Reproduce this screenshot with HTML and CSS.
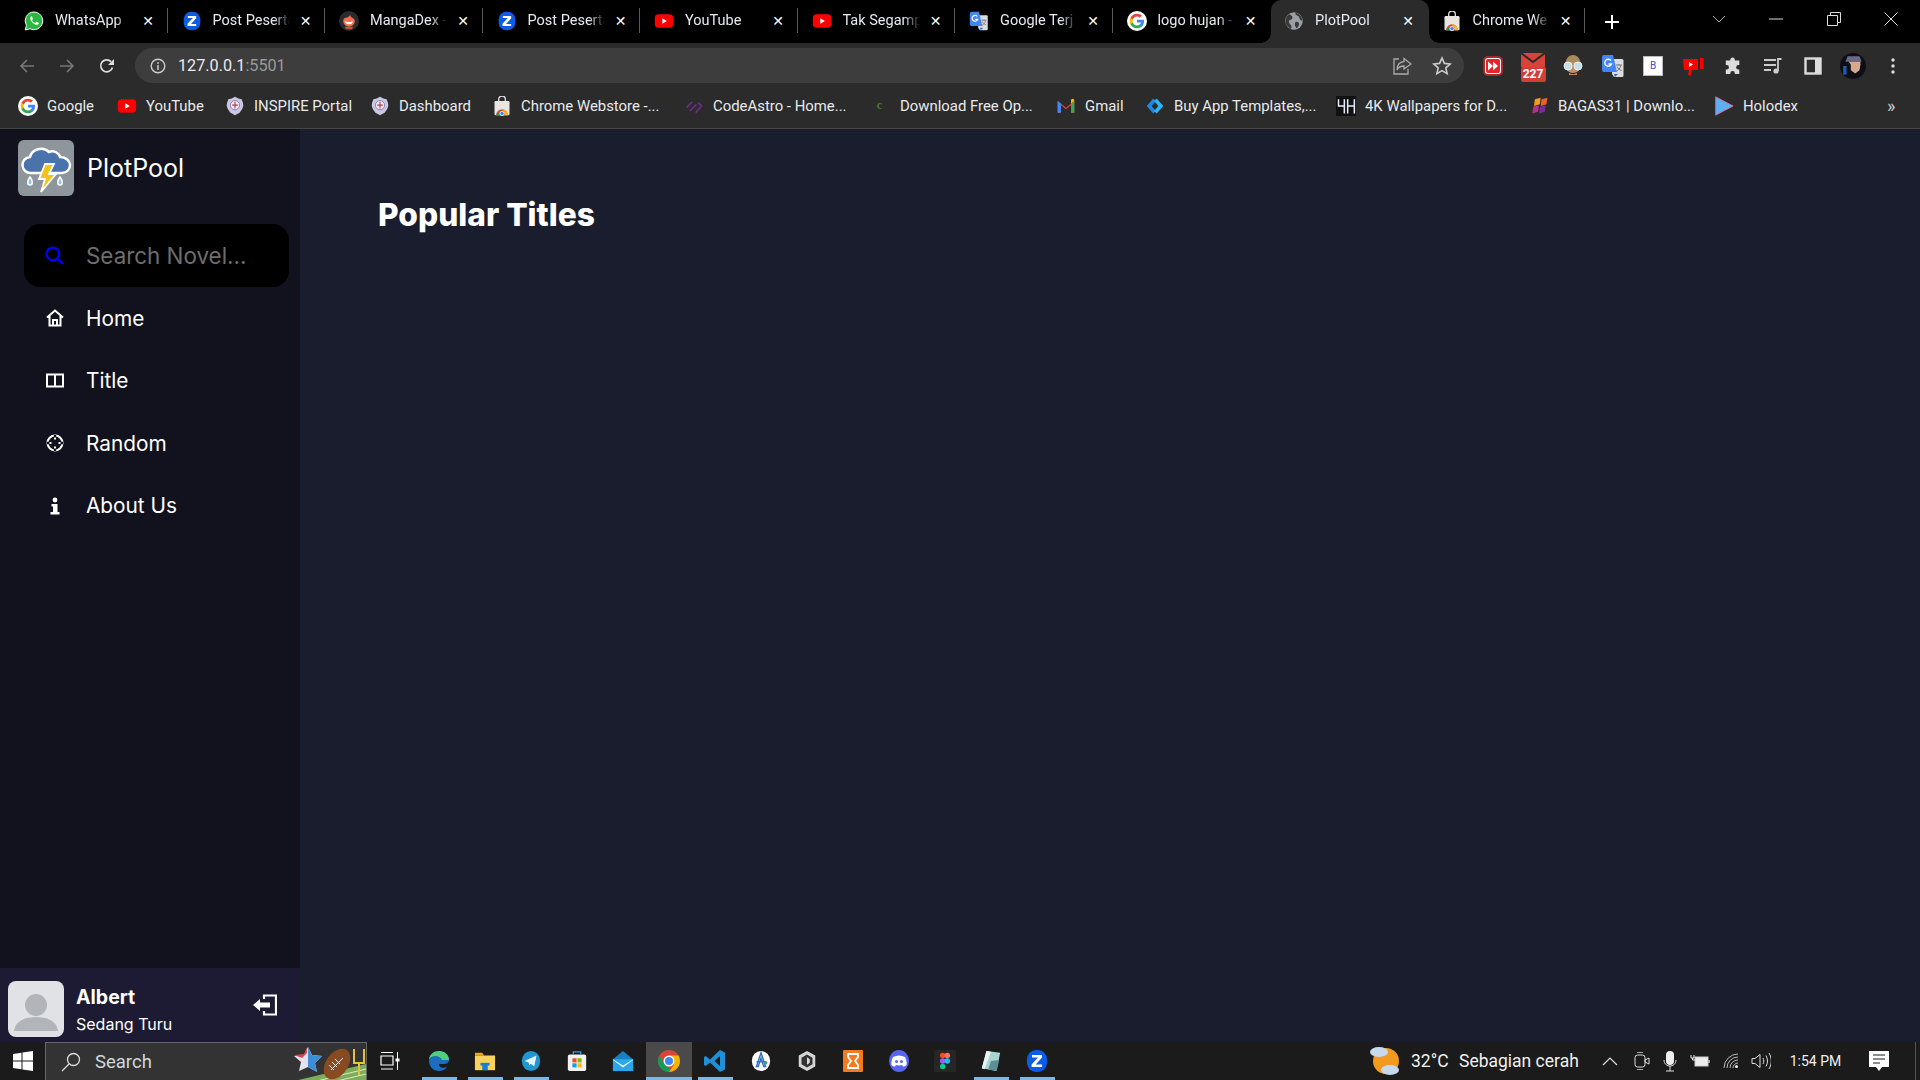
FILE: index.html
```html
<!DOCTYPE html>
<html lang="en">
<head>
<meta charset="utf-8">
<title>PlotPool</title>
<link rel="stylesheet" href="styles.css">
</head>
<body>
<svg class="defs" width="0" height="0" aria-hidden="true">
  <symbol id="g" viewBox="0 0 24 24"><circle cx="12" cy="12" r="12" fill="#fff"/><g transform="translate(2.4 2.4) scale(.8)"><path fill="#4285F4" d="M22.56 12.25c0-.78-.07-1.53-.2-2.25H12v4.26h5.92c-.26 1.37-1.04 2.53-2.21 3.31v2.77h3.57c2.08-1.92 3.28-4.74 3.28-8.09z"/><path fill="#34A853" d="M12 23c2.97 0 5.46-.98 7.28-2.66l-3.57-2.77c-.98.66-2.23 1.06-3.71 1.06-2.86 0-5.29-1.93-6.16-4.53H2.18v2.84C3.99 20.53 7.7 23 12 23z"/><path fill="#FBBC05" d="M5.84 14.09c-.22-.66-.35-1.36-.35-2.09s.13-1.43.35-2.09V7.07H2.18C1.43 8.55 1 10.22 1 12s.43 3.45 1.18 4.93l3.66-2.84z"/><path fill="#EA4335" d="M12 5.38c1.62 0 3.06.56 4.21 1.64l3.15-3.15C17.45 2.09 14.97 1 12 1 7.7 1 3.99 3.47 2.18 7.07l3.66 2.84c.87-2.6 3.3-4.53 6.16-4.53z"/></g></symbol>
  <symbol id="yt" viewBox="0 0 24 24"><rect x="1" y="4" width="22" height="16" rx="4.5" fill="#f00"/><path d="M10 8.8v6.4l5.4-3.2z" fill="#fff"/></symbol>
  <symbol id="z" viewBox="0 0 24 24"><rect x="2" y="1" width="20" height="22" rx="9" fill="#0b5ce6"/><path d="M7 6h10v2.6L10.8 15.6H17V18H6.6v-2.6l6.3-7H7z" fill="#fff"/></symbol>
  <symbol id="wa" viewBox="0 0 24 24"><path d="M12 1.2a10.6 10.6 0 0 0-9.1 16L1.5 22.8l5.7-1.5A10.6 10.6 0 1 0 12 1.2z" fill="#2bb741" stroke="#fff" stroke-width="1.2"/><path d="M8.6 6.6c-.8.6-1.5 1.8-1 3.4.9 3 3.5 5.6 6.5 6.5 1.6.4 2.8-.2 3.4-1 .3-.5.3-1.2.1-1.4l-2.3-1.100c-.3-.1-.5 0-.7.2l-.8 1c-.2.2-.4.2-.7.1a7 7 0 0 1-3.4-3c-.1-.3 0-.5.1-.6l.7-.9c.2-.2.2-.4.1-.6L9.7 6.7c-.2-.3-.7-.4-1.100-.1z" fill="#fff"/></symbol>
  <symbol id="md" viewBox="0 0 24 24"><circle cx="12" cy="12" r="12" fill="#2b2b2f"/><path d="M5 12c0-3 3-5 5-4 1-1 3-3 4-3-.5 1.500.5 2 2 3 2 1 3 2.500 3 4a7 7 0 0 1-14 0z" fill="#f26f4f"/><path d="M7 12c2 1.500 8 1.500 10 0-.5 3-2.500 4-5 4s-4.500-1-5-4z" fill="#fff"/><path d="M7 19h10l-1.500 3h-7z" fill="#b85a40"/></symbol>
  <symbol id="tr" viewBox="0 0 24 24"><path d="M11 5h10a1.500 1.500 0 0 1 1.500 1.500v15A1.500 1.500 0 0 1 21 23H13L11 20z" fill="#dadce0"/><path d="M3 1h9l4 17H3a2 2 0 0 1-2-2V3a2 2 0 0 1 2-2z" fill="#4285f4"/><path d="M13 20h4l-3 3z" fill="#3367d6"/><path d="M10 6.500A3.500 3.500 0 1 0 10.500 10H7.500" fill="none" stroke="#fff" stroke-width="1.400"/><path d="M15 11h6M18 10v1.500M20 11.500c-.8 3-3 5-4.500 5.500M16 12.500c.8 2 2.500 3.500 4.500 4" stroke="#777" stroke-width="1" fill="none"/></symbol>
  <symbol id="ws" viewBox="0 0 24 24"><path d="M8 6V4a4 4 0 0 1 8 0v2" fill="none" stroke="#ddd" stroke-width="1.600"/><rect x="3" y="6" width="18" height="17" rx="1.500" fill="#e9e6e2"/><path d="M5 23a7 7 0 0 1 14 0z" fill="#db4437"/><path d="M12 17a3.200 3.200 0 0 1 3 3.500V23h4a7 7 0 0 0-7-7z" fill="#fbbc05"/><path d="M5 23h7v-1l-3-2-3 .500z" fill="#0f9d58"/><circle cx="12" cy="21" r="2.600" fill="#4285f4" stroke="#fff"/></symbol>
  <symbol id="emb" viewBox="0 0 24 24"><path d="M12 1l4 2 4 1 1.500 4 .5 4-1.500 4-3 4-5.500 3-5.500-3-3-4L2 12l.5-4L4 4l4-1z" fill="#cbc6e2"/><circle cx="12" cy="11" r="5.500" fill="#f0eef8" stroke="#7d6cb0"/><path d="M12 7v8M8.500 11h7" stroke="#b3404a" stroke-width="1.400"/></symbol>
</svg>

<header class="tabstrip">
  <div class="tab"><svg class="fav"><use href="#wa"/></svg><span class="tab-title">WhatsApp</span><span class="close">✕</span><i class="sep"></i></div>
  <div class="tab"><svg class="fav"><use href="#z"/></svg><span class="tab-title">Post Peserta</span><span class="close">✕</span><i class="sep"></i></div>
  <div class="tab"><svg class="fav"><use href="#md"/></svg><span class="tab-title">MangaDex -</span><span class="close">✕</span><i class="sep"></i></div>
  <div class="tab"><svg class="fav"><use href="#z"/></svg><span class="tab-title">Post Peserta</span><span class="close">✕</span><i class="sep"></i></div>
  <div class="tab"><svg class="fav"><use href="#yt"/></svg><span class="tab-title">YouTube</span><span class="close">✕</span><i class="sep"></i></div>
  <div class="tab"><svg class="fav"><use href="#yt"/></svg><span class="tab-title">Tak Segamp</span><span class="close">✕</span><i class="sep"></i></div>
  <div class="tab"><svg class="fav"><use href="#tr"/></svg><span class="tab-title">Google Terj</span><span class="close">✕</span><i class="sep"></i></div>
  <div class="tab"><svg class="fav"><use href="#g"/></svg><span class="tab-title">logo hujan -</span><span class="close">✕</span></div>
  <div class="tab tab-active"><svg class="fav" viewBox="0 0 24 24"><circle cx="12" cy="12" r="10.500" fill="#9aa0a6"/><path d="M6 4c3 1 5 3 4 5s-4 1-4 4 3 3 3 6c0 1 0 2-1 2.500A10.500 10.500 0 0 1 2 10c1-3 2.500-5 4-6zM14 2c-1 3 1 3 3 4s1 4 3 5 2 0 2 0a10.500 10.500 0 0 0-8-9zM15 13c2 0 3 1 3 3s-2 4-3 5c-1-2-2-3-2-5s1-3 2-3z" fill="#3a3a3a"/></svg><span class="tab-title">PlotPool</span><span class="close">✕</span></div>
  <div class="tab"><svg class="fav"><use href="#ws"/></svg><span class="tab-title">Chrome We</span><span class="close">✕</span><i class="sep"></i></div>
  <div class="newtab"><svg width="16" height="16" viewBox="0 0 16 16"><path d="M8 1v14M1 8h14" stroke="#fff" stroke-width="2"/></svg></div>
  <div class="winctl">
    <span class="winbtn"><svg width="14" height="8" viewBox="0 0 14 8"><path d="M1 1l6 6 6-6" fill="none" stroke="#aaa"/></svg></span>
    <span class="winbtn"><svg width="14" height="2" viewBox="0 0 14 2"><path d="M0 1h14" stroke="#ddd"/></svg></span>
    <span class="winbtn"><svg width="14" height="14" viewBox="0 0 14 14"><path d="M.5 3.500h10v10H.5zM3.500 3.500v-3h10v10h-3" fill="none" stroke="#ddd"/></svg></span>
    <span class="winbtn"><svg width="14" height="14" viewBox="0 0 14 14"><path d="M.5.500l13 13M13.500.500l-13 13" stroke="#ddd"/></svg></span>
  </div>
</header>

<div class="toolbar">
  <div class="navbtns">
    <svg viewBox="0 0 16 16" width="16" height="16"><path d="M15 8H2M8 2L2 8l6 6" fill="none" stroke="#777" stroke-width="1.600"/></svg>
    <svg viewBox="0 0 16 16" width="16" height="16"><path d="M1 8h13M8 2l6 6-6 6" fill="none" stroke="#777" stroke-width="1.600"/></svg>
    <svg viewBox="0 0 16 16" width="16" height="16"><path d="M13.500 9.500A6 6 0 1 1 12 3.600" fill="none" stroke="#ddd" stroke-width="1.700"/><path d="M15 1v6H9z" fill="#ddd"/></svg>
  </div>
  <div class="omnibox">
    <svg class="info" viewBox="0 0 16 16" width="16" height="16"><circle cx="8" cy="8" r="6.800" fill="none" stroke="#ccc" stroke-width="1.400"/><path d="M8 7v5M8 4v1.800" stroke="#ccc" stroke-width="1.500"/></svg>
    <span class="url">127.0.0.1<span class="url-port">:5501</span></span>
    <span class="omni-actions">
      <svg viewBox="0 0 20 20" width="20" height="20"><path d="M7 3H2v15h14v-5" fill="none" stroke="#aaa" stroke-width="1.300"/><path d="M12 2.500l7 5.500-7 5v-3c-4 0-6 2-7 4 0-5 3-8 7-8.500z" fill="none" stroke="#aaa" stroke-width="1.300"/></svg>
      <svg viewBox="0 0 20 20" width="20" height="20"><path d="M10 2l2.400 5.400 5.800.6-4.400 3.900 1.300 5.700L10 14.600l-5.100 3 1.300-5.700L1.800 8l5.800-.6z" fill="none" stroke="#ccc" stroke-width="1.600"/></svg>
    </span>
  </div>
  <div class="exts">
    <svg viewBox="0 0 20 20" width="20" height="20"><rect x="1" y="1" width="18" height="18" rx="4" fill="#fff" stroke="#a52a2a" stroke-width="2"/><rect x="3" y="3" width="14" height="14" rx="2" fill="#e8232a"/><path d="M5 5.500l5 4.500-5 4.500zM10 5.500l5 4.500-5 4.500z" fill="#fff"/></svg>
    <span class="gm"><svg viewBox="0 0 24 14" width="24" height="14"><rect width="24" height="14" fill="#d9443a"/><path d="M0 0l12 9L24 0" fill="none" stroke="#2b2b2b" stroke-width="2"/></svg><b class="gm-count">227</b></span>
    <svg viewBox="0 0 24 24" width="24" height="24"><circle cx="12" cy="11" r="8" fill="#c58f6a"/><path d="M5 8a7 7 0 0 1 14 0z" fill="#a88a5c"/><circle cx="7" cy="12" r="4" fill="#bfe3e8" stroke="#eee"/><circle cx="17" cy="12" r="4" fill="#bfe3e8" stroke="#eee"/><path d="M8 19c2 1.500 6 1.500 8 0v2H8z" fill="#c58f6a"/></svg>
    <svg viewBox="0 0 24 24" width="24" height="24"><use href="#tr"/></svg>
    <span class="ext-b">B</span>
    <svg viewBox="0 0 24 24" width="24" height="24"><path d="M2 5h15v11h-6l-1 6-3-1 1-5H3z" fill="#f00"/><path d="M8 8v5l4-2.500z" fill="#fff"/><path d="M19 4h3.500v11H19z" fill="#f00"/></svg>
    <svg viewBox="0 0 20 20" width="18" height="18"><path d="M8 1a2.500 2.500 0 0 1 4 2v1h5v5h-1a2.500 2.500 0 0 0 0 5h1v5h-5v-1a2.500 2.500 0 0 0-5 0v1H2v-5h1a2.500 2.500 0 0 0 0-5H2V4h5V3c0-.8.400-1.500 1-2z" fill="#ddd"/></svg>
    <svg viewBox="0 0 20 20" width="20" height="20"><path d="M1 4h12M1 9h12M1 14h7" stroke="#ccc" stroke-width="1.800"/><circle cx="13" cy="15" r="2.600" fill="#ccc"/><path d="M15 15V3h3.500" fill="none" stroke="#ccc" stroke-width="1.800"/></svg>
    <svg viewBox="0 0 18 18" width="18" height="18"><rect x="1.500" y="1.500" width="15" height="15" fill="none" stroke="#ddd" stroke-width="2.400"/><rect x="11" y="1" width="6" height="16" fill="#ddd"/></svg>
    <svg viewBox="0 0 24 24" width="26" height="26"><circle cx="12" cy="12" r="12" fill="#0e0e16"/><path d="M5 8l2-5h11l2 5z" fill="#6b6a8a"/><path d="M8 8h11l-1 6-3 2 1-3-5-1z" fill="#d9a98d"/><path d="M10 9l9 1-1 6-4 3-4-3z" fill="#d9a98d"/><path d="M3 12h3v8H3z" fill="#1f5fb0"/></svg>
    <svg viewBox="0 0 6 18" width="6" height="18"><circle cx="3" cy="3" r="1.700" fill="#ddd"/><circle cx="3" cy="9" r="1.700" fill="#ddd"/><circle cx="3" cy="15" r="1.700" fill="#ddd"/></svg>
  </div>
</div>

<nav class="bookmarks">
  <a class="bm"><svg class="fav"><use href="#g"/></svg>Google</a>
  <a class="bm"><svg class="fav"><use href="#yt"/></svg>YouTube</a>
  <a class="bm"><svg class="fav"><use href="#emb"/></svg>INSPIRE Portal</a>
  <a class="bm"><svg class="fav"><use href="#emb"/></svg>Dashboard</a>
  <a class="bm"><svg class="fav"><use href="#ws"/></svg>Chrome Webstore -...</a>
  <a class="bm"><svg class="fav" viewBox="0 0 24 24"><path d="M3 14l7-7M7 18l8-8M14 20l7-8-4-4" fill="none" stroke="#6a2f86" stroke-width="2"/></svg>CodeAstro - Home...</a>
  <a class="bm"><svg class="fav" viewBox="0 0 24 24"><text x="7" y="16" class="cg">c</text></svg>Download Free Op...</a>
  <a class="bm"><svg class="fav" viewBox="0 0 24 24"><path d="M2 20V6l10 8 10-8v14h-4V11l-6 5-6-5v9z" fill="#ea4335"/><path d="M2 20V6l4 3v11z" fill="#4285f4"/><path d="M22 20V6l-4 3v11z" fill="#34a853"/><path d="M22 6l-4 3V5a2 2 0 0 1 4 1z" fill="#fbbc05"/></svg>Gmail</a>
  <a class="bm"><svg class="fav" viewBox="0 0 24 24"><path d="M10 3L2 12l8 9 3-3-5-6 5-6z" fill="#1e88e5"/><path d="M14 3l8 9-8 9-3-3 5-6-5-6z" fill="#29b6f6"/></svg>Buy App Templates,...</a>
  <a class="bm"><svg class="fav" viewBox="0 0 24 24"><rect width="24" height="24" fill="#111"/><path d="M3 4v8h7M10 4v17M14 4v17M22 4v17M14 12h8" fill="none" stroke="#e8f0ff" stroke-width="1.800"/></svg>4K Wallpapers for D...</a>
  <a class="bm"><svg class="fav" viewBox="0 0 24 24"><path d="M7 4l7-2-1 8-7 2z" fill="#f59a1d"/><path d="M15 4l7-2-1 8-7 2z" fill="#e8622a"/><path d="M5 13l7-2-1 8-7 2z" fill="#b52f8c"/><path d="M13 13l7-2-1 8-7 2z" fill="#7a2e9e"/></svg>BAGAS31 | Downlo...</a>
  <a class="bm"><svg class="fav" viewBox="0 0 24 24"><path d="M2 1l21 11L2 23z" fill="#5cb0f2" stroke="#e56a93"/></svg>Holodex</a>
  <a class="bm-more">»</a>
</nav>

<div class="page">
  <aside class="sidebar">
    <div class="brand">
      <span class="logo">
        <svg viewBox="0 0 56 56" width="56" height="56"><rect width="56" height="56" rx="6" fill="#8e969b"/><path d="M13 33a8 8 0 0 1-1-16c2-8 13-11 19-5 5-2 10 1 11 5 6 0 10 4 10 8s-3 8-8 8z" fill="#4a72ad" stroke="#fff" stroke-width="2.500"/><path d="M27 24l-6 15h6l-4 13 15-18h-7l5-10z" fill="#f0c41a" stroke="#fff" stroke-width="1.800"/><path d="M12 37c-3 4-3 8 0 8s3-4 0-8zM42 37c-3 4-3 8 0 8s3-4 0-8z" fill="#8cc4ec" stroke="#fff" stroke-width="1.500"/></svg>
      </span>
      <span class="brand-name">PlotPool</span>
    </div>
    <div class="search">
      <svg class="search-icon" viewBox="0 0 18 18" width="19" height="19"><circle cx="7.500" cy="7.500" r="6" fill="none" stroke="#00f" stroke-width="2.200"/><path d="M12 12l5 5" stroke="#00f" stroke-width="2"/></svg>
      <span class="search-text">Search Novel...</span>
    </div>
    <ul class="menu">
      <li class="menu-item"><span class="menu-icon"><svg viewBox="0 0 18 18" width="18" height="18"><path d="M1 8.500L9 1.500l8 7M3.500 7v9.500h11V7M7 16.500V11h4v5.500" fill="none" stroke="#fff" stroke-width="2"/></svg></span>Home</li>
      <li class="menu-item"><span class="menu-icon"><svg viewBox="0 0 18 16" width="18" height="16"><path d="M1 1.500h16v12H1zM9 1.500v13" fill="none" stroke="#fff" stroke-width="2"/></svg></span>Title</li>
      <li class="menu-item"><span class="menu-icon"><svg viewBox="0 0 18 18" width="18" height="18"><circle cx="9" cy="9" r="7.500" fill="none" stroke="#fff" stroke-width="2"/><path d="M9 1v2.500M9 14.500V17M1 9h2.500M14.500 9H17" stroke="#12121e" stroke-width="2.400"/><path d="M9 3.500v2M9 12.500v2M3.500 9h2M12.500 9h2" stroke="#fff" stroke-width="2"/></svg></span>Random</li>
      <li class="menu-item"><span class="menu-icon"><svg viewBox="0 0 10 18" width="10" height="18"><circle cx="5" cy="3" r="2.400" fill="#fff"/><path d="M1.500 7h6v8h2v2.500H.5V15h2.500V9.500H1.500z" fill="#fff"/></svg></span>About Us</li>
    </ul>
    <footer class="user">
      <span class="avatar"><svg viewBox="0 0 56 56" width="56" height="56"><rect width="56" height="56" rx="8" fill="#e0e2e5"/><circle cx="28" cy="24" r="11" fill="#b1b5b9"/><path d="M6 50c1-10 11-14 22-14s21 4 22 14z" fill="#b1b5b9"/></svg></span>
      <span class="user-info"><b class="user-name">Albert</b><span class="user-status">Sedang Turu</span></span>
      <svg class="logout" viewBox="0 0 24 22" width="24" height="22"><path d="M11 5V1.500h12v19H11V17" fill="none" stroke="#fff" stroke-width="2.200"/><path d="M0 11l7-6v3.500h10v5H7V17z" fill="#fff"/></svg>
    </footer>
  </aside>
  <main class="content">
    <h1 class="heading">Popular Titles</h1>
  </main>
</div>

<footer class="taskbar">
  <span class="start"><svg viewBox="0 0 20 20" width="20" height="20"><path d="M0 3l8.500-1.200V9.500H0zM9.500 1.600L20 0v9.500H9.500zM0 10.500h8.500v7.700L0 17zM9.500 10.500H20V20L9.500 18.400z" fill="#fff"/></svg></span>
  <div class="tsearch">
    <svg viewBox="0 0 20 20" width="20" height="20"><circle cx="12.500" cy="7.500" r="6" fill="none" stroke="#ddd" stroke-width="1.300"/><path d="M8 12l-7 7" stroke="#ddd" stroke-width="1.300"/></svg>
    <span class="tsearch-text">Search</span>
    <svg class="tsearch-art" viewBox="0 0 75 38" width="75" height="38"><path d="M3 38l72-17v17z" fill="#7cae5a"/><path d="M26 38l49-12M46 38l29-7" stroke="#dfe8c8"/><path d="M17 4l4 8 10 1-7 7 2 9-9-5-9 4 2-9-7-6 10-1z" fill="#e4e2ee"/><path d="M17 4l4 8 10 1-7 7 2 9-9-5z" fill="#3c8fd6"/><path d="M3 12l10-1 3-7v6l-5 5z" fill="#d9434c"/><ellipse cx="46" cy="21" rx="11" ry="17" transform="rotate(35 46 21)" fill="#8a4a20"/><path d="M40 27l12-12M41 19l5 5M44 16l5 5M38 22l5 5" stroke="#eee"/><path d="M63 6v14h10V6M68 20v12" fill="none" stroke="#e4c33a" stroke-width="2"/></svg>
  </div>
  <span class="tview"><svg viewBox="0 0 20 20" width="20" height="20"><path d="M1 5h12v9H1zM1 1.500h12M1 18h12" fill="none" stroke="#fff" stroke-width="1.200"/><path d="M17.500 1v18" stroke="#fff"/><rect x="15.500" y="7.500" width="4" height="3" fill="#fff"/></svg></span>
  <span class="tapp run"><svg viewBox="0 0 24 24" width="24" height="24"><path d="M2 12C2 5 7 2 12 2c6 0 10 4 10 9 0 3-3 4-5 4h-5c0 3 3 5 8 3-2 3-5 4-8 4-6 0-10-5-10-10z" fill="#1a6ebd"/><path d="M22 11c0-5-4-9-10-9-5 0-9 3-10 8 3-4 11-4 13 1h7z" fill="#4fd07d"/></svg></span>
  <span class="tapp run"><svg viewBox="0 0 24 24" width="22" height="22"><path d="M1 3h8l2 3H1z" fill="#e8a920"/><rect x="1" y="6" width="22" height="16" fill="#f9d35c"/><path d="M9 22v-6h6v6" fill="#1780d6"/><rect x="7" y="14" width="10" height="3" fill="#1780d6"/></svg></span>
  <span class="tapp run"><svg viewBox="0 0 24 24" width="22" height="22"><ellipse cx="12" cy="12" rx="10" ry="11" fill="#2097cf"/><path d="M5 12l13-6-2.500 12-3.500-3-2 2-.5-3.500z" fill="#e9f5fb"/></svg></span>
  <span class="tapp"><svg viewBox="0 0 24 24" width="22" height="22"><rect x="2" y="5" width="20" height="18" rx="2" fill="#f2f2f2"/><path d="M8 5V2h8v3" fill="none" stroke="#3a9be0" stroke-width="1.500"/><rect x="7" y="9" width="4.500" height="4.500" fill="#f25022"/><rect x="12.500" y="9" width="4.500" height="4.500" fill="#7fba00"/><rect x="7" y="14.500" width="4.500" height="4.500" fill="#00a4ef"/><rect x="12.500" y="14.500" width="4.500" height="4.500" fill="#ffb900"/></svg></span>
  <span class="tapp"><svg viewBox="0 0 24 24" width="22" height="22"><path d="M1 10L12 1l11 9v12H1z" fill="#1a7ec2"/><path d="M1 10h22v13H1z" fill="#28a8ea"/><path d="M1 10l11 7 11-7v1L12 19 1 11z" fill="#e6f4fc"/></svg></span>
  <span class="tapp tapp-active"><svg viewBox="0 0 24 24" width="24" height="24"><circle cx="12" cy="12" r="11" fill="#db4437"/><path d="M12 23A11 11 0 0 1 2.500 6.500L8 16a5 5 0 0 0 4 2z" fill="#0f9d58"/><path d="M12 23a11 11 0 0 0 9.500-16.500H12l5 9z" fill="#f4b400"/><circle cx="12" cy="12" r="5.500" fill="#fff"/><circle cx="12" cy="12" r="4" fill="#4285f4"/></svg></span>
  <span class="tapp run"><svg viewBox="0 0 24 24" width="24" height="24"><path d="M17 1l5 2.500v17L17 23 7 13.500 2.800 17 1 16V8l1.800-1L7 10.500zM17 7l-5.500 5 5.500 5z" fill="#1f8fd8"/></svg></span>
  <span class="tapp"><svg viewBox="0 0 24 24" width="22" height="22"><ellipse cx="12" cy="12" rx="10" ry="11" fill="#fff"/><path d="M12 3l-5 15h2l3-9 3 9h2zM7 13h10" fill="none" stroke="#2d6fc0" stroke-width="1.500"/><circle cx="17" cy="14" r="2" fill="#2aa87a"/></svg></span>
  <span class="tapp"><svg viewBox="0 0 24 24" width="22" height="22"><path d="M12 1l9 5v12l-9 5-9-5V6z" fill="#d6d6d6"/><path d="M12 5l6 3.500v7L12 19l-6-3.500v-7z" fill="#333"/><path d="M12 8l3 2v4l-3 2z" fill="#ddd"/></svg></span>
  <span class="tapp"><svg viewBox="0 0 24 24" width="24" height="24"><rect x="2" y="1" width="20" height="22" rx="1" fill="#f47a20"/><path d="M7 5h10v3l-3 4 3 4v3H7v-3l3-4-3-4z" fill="none" stroke="#fff" stroke-width="1.800"/></svg></span>
  <span class="tapp"><svg viewBox="0 0 24 24" width="24" height="24"><ellipse cx="12" cy="12" rx="10" ry="11" fill="#5865f2"/><path d="M6 8c4-2 8-2 12 0 1.500 3 2 6 1.500 8-1 1-2.500 1.500-3.500 1.500l-1-1.500c-2 .6-4 .6-6 0l-1 1.500c-1 0-2.500-.5-3.500-1.500C4 14 4.500 11 6 8z" fill="#fff"/><circle cx="9.500" cy="12.500" r="1.500" fill="#5865f2"/><circle cx="14.500" cy="12.500" r="1.500" fill="#5865f2"/></svg></span>
  <span class="tapp"><svg viewBox="0 0 24 24" width="22" height="24"><rect width="24" height="24" rx="2" fill="#262626"/><circle cx="9.500" cy="6" r="3" fill="#f24e1e"/><circle cx="14.500" cy="6" r="3" fill="#ff7262"/><circle cx="9.500" cy="12" r="3" fill="#a259ff"/><circle cx="14.500" cy="12" r="3" fill="#1abcfe"/><circle cx="9.500" cy="18" r="3" fill="#0acf83"/></svg></span>
  <span class="tapp run"><svg viewBox="0 0 24 24" width="22" height="22"><path d="M7 1l15 2-4 20-16-3z" fill="#a8d5d2"/><path d="M7 1l5 1-7 19-3-1z" fill="#e8f3f2"/><path d="M12 12l9-1-3 12-9-2z" fill="#5c8e96"/></svg></span>
  <span class="tapp run"><svg viewBox="0 0 24 24" width="24" height="24"><use href="#z"/></svg></span>
  <div class="tray">
    <span class="tray-cell tray-weather"><svg viewBox="0 0 30 30" width="30" height="30"><circle cx="16" cy="15" r="13" fill="#f29a1f"/><ellipse cx="9" cy="6" rx="9" ry="5" fill="#c7d9ee"/><ellipse cx="20" cy="24" rx="9" ry="5" fill="#c7d9ee"/></svg></span>
    <span class="tray-text">32°C</span>
    <span class="tray-text">Sebagian cerah</span>
    <span class="tray-cell"><svg viewBox="0 0 16 10" width="16" height="10"><path d="M1 9l7-7 7 7" fill="none" stroke="#ddd" stroke-width="1.200"/></svg></span>
    <span class="tray-cell"><svg viewBox="0 0 16 20" width="16" height="20"><rect x="1" y="4" width="10" height="12" rx="2.500" fill="none" stroke="#ddd"/><path d="M11 9l4-2v6l-4-2z" fill="none" stroke="#ddd"/><path d="M3 1.500h6M3 18.500h6" stroke="#aaa"/></svg></span>
    <span class="tray-cell"><svg viewBox="0 0 14 22" width="14" height="22"><rect x="3" y="1" width="8" height="14" rx="4" fill="#eee"/><path d="M1 10c0 8 12 8 12 0M7 16v5M3 21h8" fill="none" stroke="#ddd"/></svg></span>
    <span class="tray-cell"><svg viewBox="0 0 20 14" width="20" height="14"><rect x="5" y="3" width="13" height="9" fill="#eee" stroke="#ccc"/><path d="M19 6v3" stroke="#ccc" stroke-width="1.500"/><path d="M1 1v3h3V1M2.500 4v2H5" stroke="#eee" fill="none"/></svg></span>
    <span class="tray-cell"><svg viewBox="0 0 16 16" width="16" height="16"><path d="M1 15a14 14 0 0 1 14-14M4 15a11 11 0 0 1 11-11M7 15a8 8 0 0 1 8-8M10 15a5 5 0 0 1 5-5" fill="none" stroke="#bbb"/><circle cx="13.500" cy="13.500" r="1.500" fill="#eee"/></svg></span>
    <span class="tray-cell"><svg viewBox="0 0 20 18" width="20" height="18"><path d="M1 6.500h3l5-4v13l-5-4H1z" fill="none" stroke="#ddd"/><path d="M12 6c1 2 1 4 0 6M15 3.500c2 3.500 2 7.500 0 11M18 1c3 5 3 11 0 16" fill="none" stroke="#ddd"/></svg></span>
    <span class="tray-time">1:54 PM</span>
    <span class="tray-cell"><svg viewBox="0 0 20 21" width="20" height="21"><path d="M0 0h20v16h-7l-3 4-3-4H0z" fill="#fff"/><path d="M4 4h12M4 8h12M4 12h7" stroke="#1b1b1b"/></svg></span>
    <span class="tray-desk"></span>
  </div>
</footer>
</body>
</html>
```
FILE: styles.css
```css
* { box-sizing: border-box; }
html, body { margin: 0; height: 100%; }
body {
  display: flex;
  flex-direction: column;
  height: 100vh;
  overflow: hidden;
  background: #1a1d2d;
  color: #fff;
  font-family: Roboto, "Liberation Sans", sans-serif;
}
.defs { position: absolute; }
.cg { font: 700 14px "Liberation Serif", serif; fill: #4c7a2c; }

/* tab strip */
.tabstrip {
  flex: 0 0 43px;
  display: flex;
  align-items: center;
  padding-left: 11px;
  background: #000;
}
.tab {
  position: relative;
  flex: 0 0 157.5px;
  min-width: 0;
  height: 100%;
  display: flex;
  align-items: center;
  padding: 0 0 2px 13px;
  font-size: 14.5px;
  color: #e8eaed;
}
.fav { flex: none; width: 20px; height: 20px; }
.tab-title {
  width: 84px;
  margin-left: 11px;
  overflow: hidden;
  white-space: nowrap;
  -webkit-mask-image: linear-gradient(90deg, #000 72%, transparent 92%);
  mask-image: linear-gradient(90deg, #000 72%, transparent 92%);
}
.close {
  width: 14px;
  margin-left: 2px;
  font-size: 14px;
  font-weight: 700;
  text-align: center;
  color: #fff;
  font-family: "DejaVu Sans", sans-serif;
}
.sep {
  width: 1px;
  height: 25px;
  margin-left: 11.5px;
  background: #5a5a5a;
}
.tab-active { background: #2b2b2b; border-radius: 10px 10px 0 0; }
.tab-active::before, .tab-active::after {
  content: "";
  position: absolute;
  bottom: 0;
  width: 10px;
  height: 10px;
}
.tab-active::before { left: -10px; background: radial-gradient(circle at 0 0, #000 9.5px, #2b2b2b 10px); }
.tab-active::after { right: -10px; background: radial-gradient(circle at 100% 0, #000 9.5px, #2b2b2b 10px); }
.newtab { width: 16px; height: 16px; margin-left: 18px; display: flex; }
.winctl { margin-left: auto; display: flex; align-items: center; }
.winbtn { width: 57.5px; height: 43px; display: flex; align-items: center; justify-content: center; padding-bottom: 6px; }

/* toolbar */
.toolbar {
  flex: 0 0 45px;
  display: flex;
  align-items: flex-start;
  padding: 5px 0 5px 7px;
  background: #2b2b2b;
}
.navbtns { display: grid; grid-template-columns: repeat(3, 40px); place-items: center; height: 35px; }
.omnibox {
  width: 1329px;
  height: 35px;
  margin-left: 8px;
  padding: 0 2px 0 15px;
  display: flex;
  align-items: center;
  border-radius: 18px;
  background: #3d3d3d;
}
.info { flex: none; }
.url { margin-left: 12px; font-size: 16.2px; color: #e8eaed; }
.url-port { color: #9a9a9a; }
.omni-actions { margin-left: auto; display: grid; grid-template-columns: repeat(2, 40px); place-items: center; }
.exts { margin-left: 9px; display: grid; grid-template-columns: repeat(11, 40px); place-items: center; height: 35px; }
.gm { position: relative; display: flex; flex-direction: column; align-items: center; margin-top: 4px; width: 24px; }
.gm-count {
  width: 25px;
  height: 15px;
  background: #d23f38;
  border-radius: 2px;
  font-size: 12px;
  line-height: 15px;
  text-align: center;
  color: #fff;
}
.ext-b {
  width: 20px;
  height: 20px;
  background: #fff;
  color: #3f51b5;
  border: 1px solid #bbb;
  font-size: 10px;
  line-height: 18px;
  text-align: center;
}

/* bookmarks */
.bookmarks {
  flex: 0 0 41px;
  display: grid;
  grid-template-columns: 99px 108px 145px 122px 192px 187px 185px 89px 191px 193px 185px 173px auto;
  align-items: center;
  padding: 0 0 5px 18px;
  background: #2b2b2b;
  border-bottom: 1px solid #454545;
  font-size: 14.9px;
  color: #e8eaed;
}
.bm { display: flex; align-items: center; gap: 9px; white-space: nowrap; }
.bm-more { font-size: 18px; color: #ccc; }

/* page */
.page { flex: 1; min-height: 0; display: flex; font-family: Inter, sans-serif; }
.sidebar {
  width: 300px;
  display: flex;
  flex-direction: column;
  background: #12121e;
}
.brand { display: flex; align-items: center; gap: 13px; padding: 11px 0 0 18px; }
.logo { display: flex; }
.brand-name { font-size: 25px; font-weight: 400; margin-top: -1px; }
.search {
  width: 265px;
  height: 63px;
  margin: 28px 0 0 24px;
  display: flex;
  align-items: center;
  padding-left: 21px;
  border-radius: 16px;
  background: #000;
}
.search-text { margin-left: 22px; font-size: 22.4px; color: #6e6e6e; }
.menu { list-style: none; margin: 0; padding: 0; flex: 1; }
.menu-item {
  height: 62.5px;
  display: flex;
  align-items: center;
  padding-left: 45px;
  font-size: 20.8px;
}
.menu-icon { width: 20px; display: flex; justify-content: center; margin-right: 21px; }
.user {
  height: 74px;
  display: flex;
  align-items: center;
  padding: 0 23px 0 8px;
  background: #1c1b33;
}
.avatar { display: flex; margin-top: 8px; }
.user-info { display: flex; flex-direction: column; margin-left: 12px; padding-top: 8px; gap: 5px; }
.user-name { font-size: 19.5px; font-weight: 700; }
.user-status { font-size: 16px; }
.logout { margin-left: auto; }
.content { flex: 1; padding: 63px 0 0 78px; }
.heading { margin: 0; font-size: 31.7px; line-height: 46px; font-weight: 800; }

/* taskbar */
.taskbar {
  flex: 0 0 38px;
  display: flex;
  align-items: center;
  background: #1b1b1b;
  font-family: Roboto, sans-serif;
}
.start { width: 45px; display: flex; justify-content: center; }
.tsearch {
  width: 322px;
  height: 38px;
  display: flex;
  align-items: center;
  padding-left: 15px;
  background: #333;
  border: 1px solid #666;
  border-bottom: 0;
  overflow: hidden;
}
.tsearch-text { margin-left: 14px; font-size: 18.5px; color: #cfd8dc; }
.tsearch-art { margin-left: auto; flex: none; }
.tview { width: 49px; display: flex; justify-content: center; padding-right: 4px; }
.tapp {
  position: relative;
  width: 46px;
  height: 38px;
  display: flex;
  align-items: center;
  justify-content: center;
}
.run::after, .tapp-active::after {
  content: "";
  position: absolute;
  left: 5.5px;
  right: 5.5px;
  bottom: 0;
  height: 3px;
  background: #76b9ed;
}
.tapp-active { background: #4a4a4a; }
.tapp-active::after { left: 0; right: 0; }
.tray {
  margin-left: auto;
  display: grid;
  grid-template-columns: 45px 48px 133px 36px 28px 28px 32px 30px 30px 79px 48px 17px;
  align-items: center;
  height: 38px;
  font-size: 17.5px;
  color: #f0f0f0;
}
.tray-cell { display: flex; justify-content: center; }
.tray-weather { padding-right: 7px; }
.tray-text { white-space: nowrap; }
.tray-time { font-size: 14px; text-align: center; }
.tray-desk { width: 1px; height: 38px; margin-left: 12px; background: #555; }
```
